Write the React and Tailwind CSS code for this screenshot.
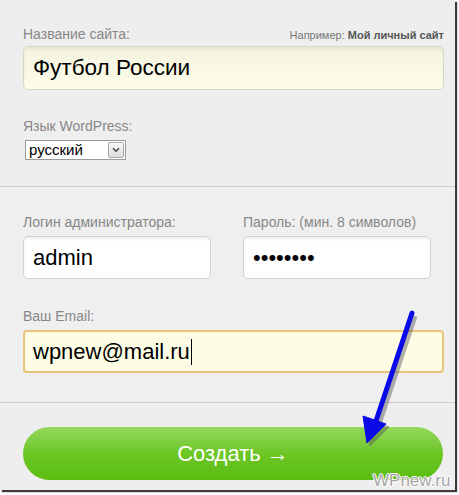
import React from "react";

const font = { fontFamily: '"Liberation Sans", Arial, sans-serif' };

const Label = ({ children }) => (
  <div className="h-[18px] text-[14px] leading-[18px] text-[#878787]">{children}</div>
);

const Arrow = () => (
  <svg className="absolute left-0 top-0 pointer-events-none" width="459" height="495" viewBox="0 0 459 495">
    <g opacity="0.45" transform="translate(3 3)" fill="#555" stroke="#555">
      <line x1="412" y1="313" x2="376" y2="421" strokeWidth="5" />
      <polygon points="363,416 386,424 367,443" strokeWidth="1" />
    </g>
    <g fill="#0a0ae6" stroke="#0a0ae6">
      <line x1="412" y1="313" x2="376" y2="421" strokeWidth="5" strokeLinecap="round" />
      <polygon points="363,416 386,424 367,443" strokeWidth="1" strokeLinejoin="round" />
    </g>
  </svg>
);

const App = () => {
  return (
    <div className="relative w-[459px] h-[495px] bg-white overflow-hidden" style={font}>
      <div className="w-[455px] h-[490px] bg-[#eeeeee] shadow-[2px_2px_1px_#3c3c3c] flex flex-col">
        <div className="h-[186px] pt-[25px] pl-[23px] pr-[11px]">
          <div className="flex items-baseline justify-between">
            <Label>Название сайта:</Label>
            <div className="text-[11px] text-[#777]">
              Например: <span className="font-bold text-[#555]">Мой личный сайт</span>
            </div>
          </div>
          <div className="mt-[2px] h-[44px] rounded-[5px] border border-[#d7d7c4] bg-gradient-to-b from-[#f3f3df] to-[#fdfdea] shadow-[inset_0_2px_3px_rgba(0,0,0,0.06)] flex items-center px-[9px]">
            <span className="text-[22.5px] text-black">Футбол России</span>
          </div>
          <div className="mt-[27px]">
            <Label>Язык WordPress:</Label>
          </div>
          <div className="mt-[5px] ml-[2px] w-[101px] h-[20px] border border-[#9a9a9a] bg-white flex items-center">
            <span className="flex-1 pl-[3px] text-[15px] leading-[18px] text-black">русский</span>
            <div className="w-[16px] h-[16px] mr-[1px] border border-[#a8a8a8] rounded-[2px] bg-gradient-to-b from-[#fafafa] to-[#dcdcdc] flex items-center justify-center">
              <svg width="8" height="6" viewBox="0 0 8 6">
                <path d="M1 1.2 L4 4.2 L7 1.2" fill="none" stroke="#444" strokeWidth="1.6" />
              </svg>
            </div>
          </div>
        </div>
        <div className="h-px bg-[#cdcdcd]" />
        <div className="h-[215px] pt-[26px] pl-[23px] pr-[11px] bg-[#efefef]">
          <div className="flex gap-[32px]">
            <div className="w-[188px]">
              <Label>Логин администратора:</Label>
              <div className="mt-[5px] h-[43px] rounded-[5px] border border-[#d2d2d2] bg-white shadow-[inset_0_2px_3px_rgba(0,0,0,0.06)] flex items-center px-[9px]">
                <span className="text-[22px] text-black">admin</span>
              </div>
            </div>
            <div className="w-[188px]">
              <Label>Пароль: (мин. 8 символов)</Label>
              <div className="mt-[5px] h-[43px] rounded-[5px] border border-[#d2d2d2] bg-white shadow-[inset_0_2px_3px_rgba(0,0,0,0.06)] flex items-center px-[9px]">
                <span className="text-[22px] text-black">••••••••</span>
              </div>
            </div>
          </div>
          <div className="mt-[28px]">
            <Label>Ваш Email:</Label>
          </div>
          <div className="mt-[5px] h-[43px] rounded-[4px] border-2 border-[#e8c47a] bg-[#fdfde6] flex items-center px-[8px]">
            <span className="text-[22px] text-black">wpnew@mail.ru</span>
            <span className="w-px h-[26px] bg-black ml-px" />
          </div>
        </div>
        <div className="h-px bg-[#cdcdcd]" />
        <div className="flex-1 pt-[24px] pl-[23px] pr-[12px]">
          <div className="h-[53px] rounded-full bg-gradient-to-b from-[#95d85a] via-[#6cc624] to-[#5bbd10] flex items-center justify-center">
            <span className="text-[22px] text-white">Создать →</span>
          </div>
        </div>
      </div>
      <div
        className="absolute left-[373px] top-[472px] text-[17px] leading-[18px] text-[#a5a5a5]"
        style={{ textShadow: "1px 0 0 #fff, -1px 0 0 #fff, 0 1px 0 #fff, 0 -1px 0 #fff" }}
      >
        WPnew.ru
      </div>
      <Arrow />
    </div>
  );
};

export default App;
